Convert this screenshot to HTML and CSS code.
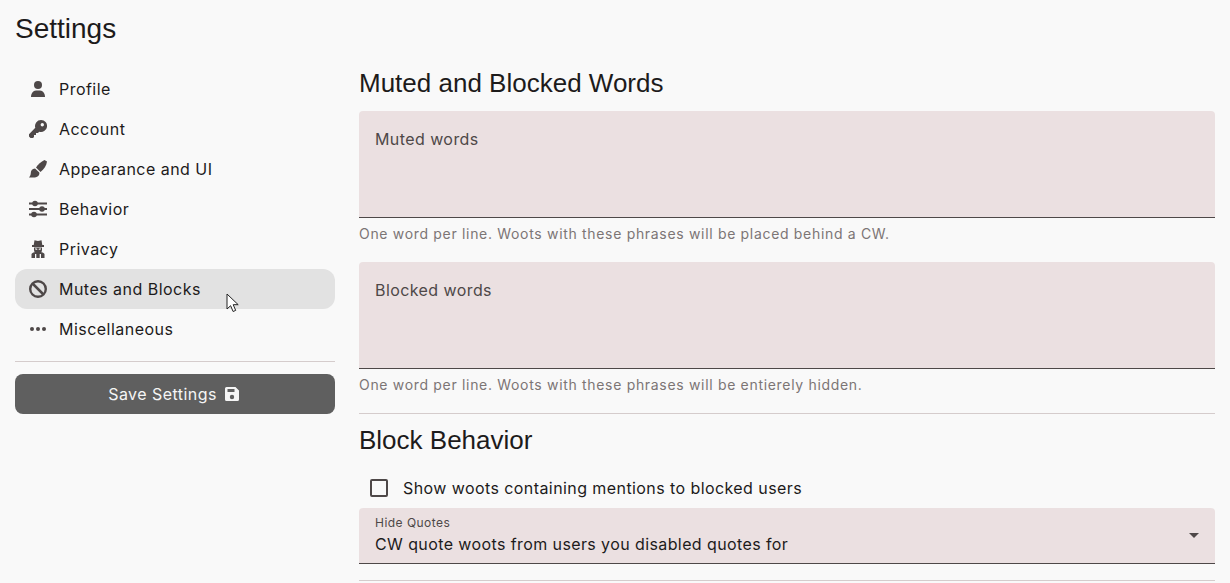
FILE: index.html
```html
<!DOCTYPE html>
<html lang="en">
<head>
    <meta charset="UTF-8">
    <title>Settings</title>
    <link rel="stylesheet" href="styles.css">
</head>
<body>
    <div class="page">
        <aside class="sidebar">
            <h1>Settings</h1>
            <nav class="nav">
                <a class="nav-item">
                    <svg class="icon" viewBox="0 0 18 18"><circle cx="9" cy="5" r="4"/><path d="M2 17C2 13.500 4 10.500 7 10.500h4c3 0 5 3 5 6.500z"/></svg>
                    Profile
                </a>
                <a class="nav-item">
                    <svg class="icon" viewBox="0 0 18 18"><path fill-rule="evenodd" d="M12 0a6 6 0 1 1-1.800 11.700L9 13H7v2H5v2l-1 1H1.500L0 16.500v-2.200l6.300-6.500A6 6 0 0 1 12 0zm1.300 3a1.700 1.700 0 1 0 0 3.400 1.700 1.700 0 0 0 0-3.400z"/></svg>
                    Account
                </a>
                <a class="nav-item">
                    <svg class="icon" viewBox="0 0 18 18"><path d="M15.500 0 18 1.500C17.500 5.500 15 9.500 11.500 12L7 7.500C9 4.500 12 1.500 15.500 0z"/><path d="M6 8.500C3 8.700 1.800 11 1.800 13 1.800 15 1 16 0 17.500H4.500C8 17.500 11 15.500 10.300 12.500z"/></svg>
                    Appearance and UI
                </a>
                <a class="nav-item">
                    <svg class="icon" viewBox="0 0 18 18"><path d="M0 2.500H18V4.500H0zM0 8H18V10H0zM0 13.500H18V15.500H0z"/><circle cx="6" cy="3.500" r="2.800"/><circle cx="13" cy="9" r="2.800"/><circle cx="5" cy="14.500" r="2.800"/></svg>
                    Behavior
                </a>
                <a class="nav-item">
                    <svg class="icon" viewBox="0 0 18 18"><path d="M5.500 .3 9 1 12.500 .3 13.300 5H15V7H3V5H4.700z"/><path d="M5 7.500H13V10C13 11.500 12 13 11 13.500H7C6 13 5 11.500 5 10z"/><path d="M2.500 18V14.500C2.500 13.500 3.500 12.800 5 12.300H13C14.500 12.800 15.500 13.500 15.500 14.500V18z"/><path class="icon-cut" d="M6 8.300 8.200 8.700 8.300 9.800 6.500 9.800zM12 8.300 9.800 8.700 9.700 9.800 11.500 9.800zM6 14H7.300V18H6zM10.700 14H12V18H10.700z"/></svg>
                    Privacy
                </a>
                <a class="nav-item active">
                    <svg class="icon" viewBox="0 0 18 18"><circle cx="9" cy="9" r="7.800" fill="none" stroke="#4e4848" stroke-width="2.400"/><path d="M2.600 4.400 4.400 2.600 15.400 13.600 13.600 15.400z"/></svg>
                    Mutes and Blocks
                </a>
                <a class="nav-item">
                    <svg class="icon" viewBox="0 0 18 18"><circle cx="3" cy="9" r="2"/><circle cx="9" cy="9" r="2"/><circle cx="15" cy="9" r="2"/></svg>
                    Miscellaneous
                </a>
            </nav>
            <hr class="divider nav-divider">
            <button class="save-btn">
                Save Settings
                <svg class="save-icon" viewBox="0 0 14 14"><path fill-rule="evenodd" d="M1.500 0H10.500L14 3.500V12.500A1.500 1.500 0 0 1 12.500 14H1.500A1.500 1.500 0 0 1 0 12.500V1.500A1.500 1.500 0 0 1 1.500 0zM2.500 2V5H9.500V2zM7 7.800A2.200 2.200 0 1 0 7 12.200 2.200 2.200 0 0 0 7 7.800z"/></svg>
            </button>
        </aside>

        <main class="content">
            <h2>Muted and Blocked Words</h2>
            <label class="field">
                <span>Muted words</span>
                <textarea></textarea>
            </label>
            <p class="hint">One word per line. Woots with these phrases will be placed behind a CW.</p>
            <label class="field">
                <span>Blocked words</span>
                <textarea></textarea>
            </label>
            <p class="hint">One word per line. Woots with these phrases will be entierely hidden.</p>
            <hr class="divider">
            <h2 class="block-title">Block Behavior</h2>
            <label class="check-row">
                <span class="checkbox"></span>
                Show woots containing mentions to blocked users
            </label>
            <div class="select">
                <div>
                    <div class="select-label">Hide Quotes</div>
                    <div class="select-value">CW quote woots from users you disabled quotes for</div>
                </div>
                <span class="caret"></span>
            </div>
            <hr class="divider last-divider">
        </main>
    </div>

    <svg class="cursor" viewBox="0 0 14 20"><path d="M1 1v15l3.600-3.300 2.500 5.800 2.600-1.100-2.500-5.700h5z" fill="#fff" stroke="#222" stroke-width="1"/></svg>
</body>
</html>
```

FILE: styles.css
```css
* {
    margin: 0;
    padding: 0;
    box-sizing: border-box;
}

html, body {
    height: 100%;
    overflow: hidden;
}

body {
    font-family: 'Inter', sans-serif;
    font-size: 16px;
    letter-spacing: 0.47px;
    background-color: #f9f9f9;
    color: #1d1b1b;
}

.page {
    display: flex;
    gap: 24px;
    padding: 0 15px;
}

.sidebar {
    width: 320px;
    flex-shrink: 0;
}

h1, h2 {
    font-family: 'Liberation Sans', Arial, sans-serif;
    font-weight: 400;
    letter-spacing: 0;
}

h1 {
    font-size: 28px;
    line-height: 32px;
    padding-top: 13px;
    margin-bottom: 24px;
}

h2 {
    font-size: 26px;
    line-height: 30px;
}

.nav-item {
    display: flex;
    align-items: center;
    gap: 12px;
    height: 40px;
    padding-left: 14px;
    border-radius: 12px;
}

.nav-item.active {
    background-color: #e2e2e2;
}

.icon {
    width: 18px;
    height: 18px;
    fill: #4e4848;
    flex-shrink: 0;
}

.icon-cut {
    fill: #f9f9f9;
}

.divider {
    border: none;
    border-top: 1px solid #d5cccc;
}

.nav-divider {
    margin-top: 12px;
    margin-bottom: 12px;
}

.save-btn {
    width: 100%;
    height: 40px;
    display: flex;
    justify-content: center;
    align-items: center;
    gap: 8px;
    padding-right: 3px;
    border: none;
    border-radius: 8px;
    background-color: #5f5f5f;
    color: #f5f5f5;
    font-family: inherit;
    font-size: 16px;
    letter-spacing: 0.45px;
}

.save-icon {
    width: 14px;
    height: 14px;
    fill: #f5f5f5;
}

.content {
    flex: 1;
    padding-top: 68px;
}

.field {
    display: flex;
    flex-direction: column;
    height: 107px;
    margin-top: 13px;
    padding: 18px 16px 8px;
    background-color: #ebe0e1;
    border-bottom: 1px solid #4e4848;
    border-radius: 4px 4px 0 0;
    color: #4e4848;
}

.field span {
    line-height: 20px;
    letter-spacing: 0.42px;
}

.field textarea {
    flex: 1;
    background: transparent;
    border: none;
    outline: none;
    resize: none;
}

.hint {
    font-size: 14px;
    line-height: 20px;
    letter-spacing: 0.68px;
    color: #7c7575;
    margin-top: 6px;
    margin-bottom: 18px;
}

.field + .hint + .field {
    margin-top: 0;
}

.block-title {
    margin-top: 11px;
}

.check-row {
    display: flex;
    align-items: center;
    gap: 15px;
    height: 24px;
    margin-top: 21px;
    padding-left: 11px;
    letter-spacing: 0.42px;
}

.checkbox {
    width: 18px;
    height: 18px;
    border: 2px solid #4e4848;
    border-radius: 2px;
}

.select {
    display: flex;
    justify-content: space-between;
    align-items: center;
    height: 56px;
    margin-top: 8px;
    padding: 0 16px 1px;
    background-color: #ebe0e1;
    border-bottom: 1px solid #4e4848;
    border-radius: 4px 4px 0 0;
}

.select-label {
    font-size: 12px;
    line-height: 16px;
    margin-bottom: 1px;
    color: #4e4848;
}

.select-value {
    line-height: 24px;
    letter-spacing: 0.4px;
}

.caret {
    width: 0;
    height: 0;
    border-left: 5px solid transparent;
    border-right: 5px solid transparent;
    border-top: 5px solid #4e4848;
}

.last-divider {
    margin-top: 16px;
}

.cursor {
    position: absolute;
    left: 226px;
    top: 293px;
    width: 14px;
    height: 20px;
}
```
